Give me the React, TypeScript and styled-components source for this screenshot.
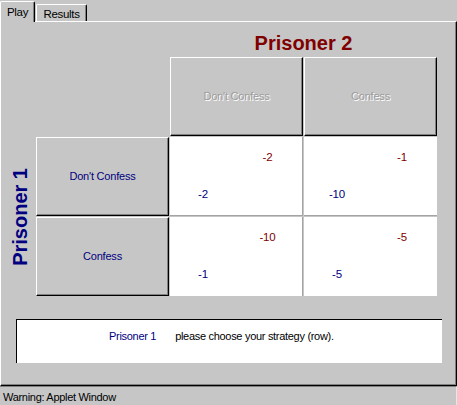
import React from "react";
import styled, { createGlobalStyle } from "styled-components";

const Global = createGlobalStyle`
  html, body {
    margin: 0;
    padding: 0;
    width: 457px;
    height: 405px;
    overflow: hidden;
    background: #c6c6c6;
    font-family: "Liberation Sans", Arial, sans-serif;
  }
  * { box-sizing: border-box; }
`;

const NAVY = "#000080";
const MAROON = "#800000";

const Window = styled.div`
  width: 457px;
  height: 405px;
  display: flex;
  flex-direction: column;
  background: #c6c6c6;
  font-size: 11px;
  letter-spacing: -0.3px;
`;

const TabBar = styled.div`
  height: 21px;
  display: flex;
  align-items: flex-end;
  position: relative;
  z-index: 1;
`;

const Tab = styled.div<{ $active?: boolean }>`
  height: ${(p) => (p.$active ? "21px" : "17px")};
  width: ${(p) => (p.$active ? "35px" : "51px")};
  margin-left: ${(p) => (p.$active ? "0" : "1px")};
  margin-bottom: ${(p) => (p.$active ? "-1px" : "0")};
  background: #c6c6c6;
  border-top: 1px solid #ffffff;
  border-left: 1px solid #ffffff;
  border-right: 1px solid #000000;
  box-shadow: inset -1px 0 0 #808080;
  border-radius: 2px 2px 0 0;
  display: flex;
  justify-content: center;
  padding-top: ${(p) => (p.$active ? "4px" : "3px")};
  color: #000;
  font-size: 11.5px;
  line-height: 13px;
  letter-spacing: -0.3px;
`;

const Panel = styled.div`
  height: 365px;
  width: 457px;
  border-top: 1px solid #ffffff;
  border-left: 1px solid #ffffff;
  border-right: 1px solid #000000;
  border-bottom: 1px solid #000000;
  box-shadow: inset -1px -1px 0 #808080;
  display: flex;
  flex-direction: column;
`;

const Board = styled.div`
  display: grid;
  grid-template-columns: 34px 133px 133px 133px;
  grid-template-rows: 34px 79px 79px 79px;
  column-gap: 1px;
  row-gap: 1px;
`;

const ColTitle = styled.div`
  grid-column: 3 / 5;
  grid-row: 1;
  align-self: end;
  text-align: center;
  color: ${MAROON};
  font-weight: bold;
  font-size: 20px;
  line-height: 23px;
  letter-spacing: 0;
  padding-bottom: 1px;
`;

const RowTitle = styled.div`
  grid-column: 1;
  grid-row: 3 / 5;
  display: flex;
  align-items: center;
  justify-content: center;
  padding-left: 4px;
  color: ${NAVY};
  font-weight: bold;
  font-size: 20px;
  line-height: 23px;
  letter-spacing: 0;
  span {
    writing-mode: vertical-rl;
    transform: rotate(180deg);
  }
`;

const StrategyButton = styled.div<{ $col: number; $row: number; $disabled?: boolean }>`
  grid-column: ${(p) => p.$col};
  grid-row: ${(p) => p.$row};
  background: #c6c6c6;
  border-top: 1px solid #ffffff;
  border-left: 1px solid #ffffff;
  border-right: 1px solid #000000;
  border-bottom: 1px solid #000000;
  box-shadow: inset -1px -1px 0 #808080;
  display: flex;
  align-items: center;
  justify-content: center;
  font-size: 11px;
  line-height: 13px;
  letter-spacing: -0.2px;
  color: ${(p) => (p.$disabled ? "#9c9c9c" : NAVY)};
  text-shadow: ${(p) => (p.$disabled ? "1px 1px 0 #ffffff" : "none")};
`;

const Cell = styled.div<{ $col: number; $row: number }>`
  grid-column: ${(p) => p.$col};
  grid-row: ${(p) => p.$row};
  background: #ffffff;
  border-right: ${(p) => (p.$col === 3 ? "1px solid #a4a4a4" : "none")};
  border-bottom: ${(p) => (p.$row === 3 ? "1px solid #a4a4a4" : "none")};
  display: grid;
  grid-template-columns: 66px 1fr;
  grid-template-rows: 40px 34px;
  padding-right: 3px;
  align-items: center;
  justify-items: center;
  font-size: 11.5px;
  line-height: 13px;
  letter-spacing: -0.2px;
`;

const Payoff = styled.span<{ $player: 1 | 2 }>`
  grid-column: ${(p) => (p.$player === 2 ? 2 : 1)};
  grid-row: ${(p) => (p.$player === 2 ? 1 : 2)};
  color: ${(p) => (p.$player === 2 ? MAROON : NAVY)};
`;

const MessageBox = styled.div`
  margin: 23px 0 0 15px;
  width: 426px;
  height: 44px;
  background: #ffffff;
  border-top: 1px solid #000000;
  border-left: 1px solid #000000;
  display: flex;
  align-items: flex-start;
  gap: 19px;
  padding: 10px 0 0 92px;
  font-size: 11px;
  line-height: 13px;
  letter-spacing: -0.3px;
`;

const Who = styled.span`
  color: ${NAVY};
`;

const Prompt = styled.span`
  color: #000000;
`;

const StatusBar = styled.div`
  flex: 1;
  border-top: 1px solid #808080;
  border-right: 1px solid #e6e6e6;
  padding: 4px 0 0 3px;
  font-size: 11px;
  line-height: 13px;
  letter-spacing: -0.3px;
  color: #000;
`;

const cols = ["Don't Confess", "Confess"];
const payoffs: [number, number][][] = [
  [
    [-2, -2],
    [-10, -1],
  ],
  [
    [-1, -10],
    [-5, -5],
  ],
];

export default function App() {
  return (
    <>
      <Global />
      <Window>
        <TabBar>
          <Tab $active>Play</Tab>
          <Tab>Results</Tab>
        </TabBar>
        <Panel>
          <Board>
            <ColTitle>Prisoner 2</ColTitle>
            <RowTitle>
              <span>Prisoner 1</span>
            </RowTitle>
            {cols.map((c, i) => (
              <StrategyButton key={"h" + c} $col={3 + i} $row={2} $disabled>
                {c}
              </StrategyButton>
            ))}
            {cols.map((c, i) => (
              <StrategyButton key={"r" + c} $col={2} $row={3 + i}>
                {c}
              </StrategyButton>
            ))}
            {payoffs.map((row, r) =>
              row.map(([p1, p2], c) => (
                <Cell key={`${r}-${c}`} $col={3 + c} $row={3 + r}>
                  <Payoff $player={2}>{p2}</Payoff>
                  <Payoff $player={1}>{p1}</Payoff>
                </Cell>
              ))
            )}
          </Board>
          <MessageBox>
            <Who>Prisoner 1</Who>
            <Prompt>please choose your strategy (row).</Prompt>
          </MessageBox>
        </Panel>
        <StatusBar>Warning: Applet Window</StatusBar>
      </Window>
    </>
  );
}
